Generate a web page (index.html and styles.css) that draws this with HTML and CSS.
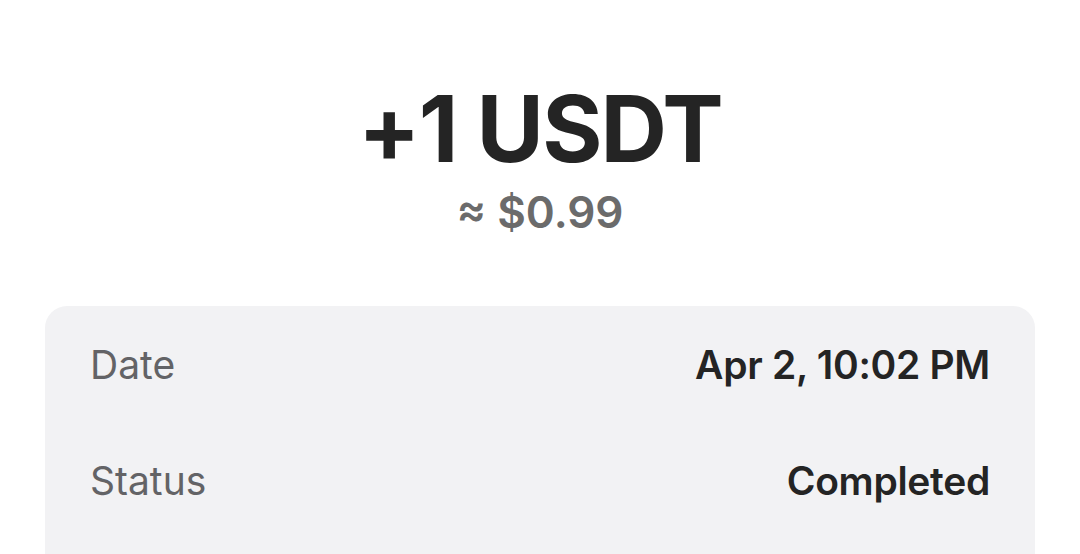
FILE: index.html
```html
<!DOCTYPE html>
<html>
<head>
<meta charset="utf-8">
<link rel="stylesheet" href="styles.css">
</head>
<body>
<main class="page">
  <header class="amount">
    <h1 class="amount-main">+1 USDT</h1>
    <p class="amount-fiat">≈ $0.99</p>
  </header>
  <section class="card">
    <div class="row">
      <span class="label">Date</span>
      <span class="value">Apr 2, 10:02 PM</span>
    </div>
    <div class="row">
      <span class="label">Status</span>
      <span class="value">Completed</span>
    </div>
  </section>
</main>
</body>
</html>
```

FILE: styles.css
```css
html, body {
  margin: 0;
  padding: 0;
  background: #ffffff;
  font-family: Inter, "Noto Sans", sans-serif;
  overflow: hidden;
}
.page {
  padding: 0 45px;
  height: 554px;
  overflow: hidden;
}
.amount {
  display: flex;
  flex-direction: column;
  align-items: center;
  padding-top: 79px;
}
.amount-main {
  margin: 0;
  font-size: 92px;
  font-weight: 700;
  line-height: 100px;
  letter-spacing: -1.8px;
  color: #242424;
}
.amount-fiat {
  margin: 7px 0 0;
  font-size: 44px;
  font-weight: 600;
  line-height: 52px;
  color: #6b6b6b;
}
.card {
  margin-top: 68px;
  background: #f2f2f4;
  border-radius: 22px;
  padding: 0 45px 80px;
}
.row {
  display: flex;
  justify-content: space-between;
  align-items: center;
  height: 116px;
}
.label {
  font-size: 39px;
  color: #636366;
}
.value {
  font-size: 39px;
  font-weight: 600;
  color: #242424;
  letter-spacing: -0.3px;
}
```
